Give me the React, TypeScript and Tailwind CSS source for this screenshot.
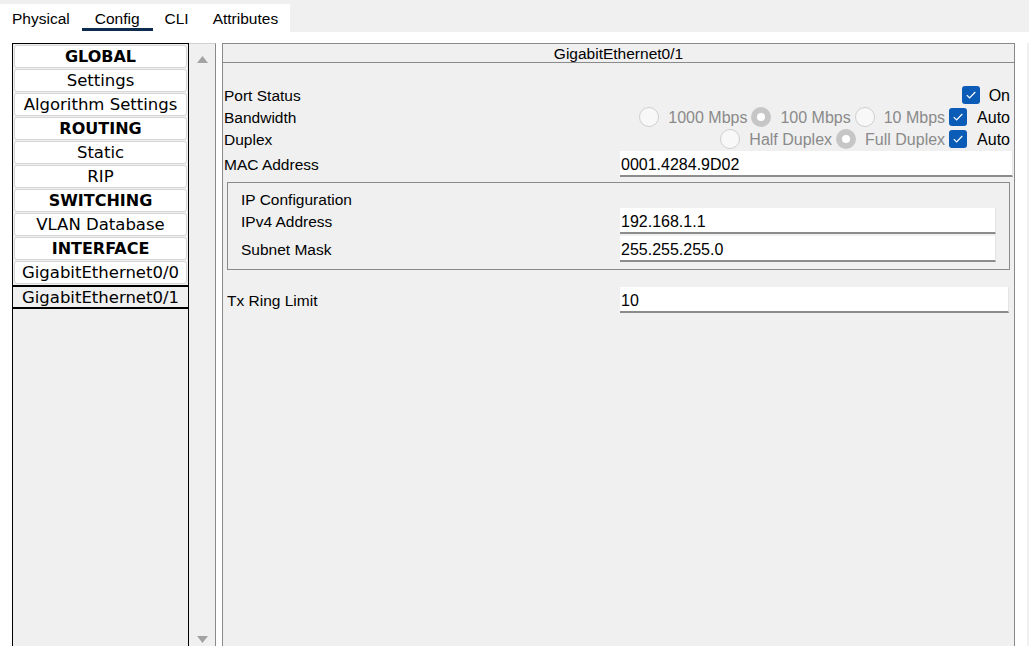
import React from "react";

const listItems = [
  { label: "GLOBAL", head: true },
  { label: "Settings" },
  { label: "Algorithm Settings" },
  { label: "ROUTING", head: true },
  { label: "Static" },
  { label: "RIP" },
  { label: "SWITCHING", head: true },
  { label: "VLAN Database" },
  { label: "INTERFACE", head: true },
  { label: "GigabitEthernet0/0" },
  { label: "GigabitEthernet0/1", selected: true },
];

const tabs = ["Physical", "Config", "CLI", "Attributes"];

function Check() {
  return (
    <span className="flex h-[18px] w-[18px] shrink-0 items-center justify-center rounded-[3px] bg-[#0b5cb6]">
      <svg width="12" height="10" viewBox="0 0 12 10">
        <path d="M1.8 5.2 4.6 8 10.3 2" fill="none" stroke="#fff" strokeWidth="1.2" />
      </svg>
    </span>
  );
}

function Radio({ on }: { on?: boolean }) {
  if (on) {
    return (
      <span className="flex h-[20px] w-[20px] shrink-0 items-center justify-center rounded-full bg-[#c6c6c6]">
        <span className="h-[8px] w-[8px] rounded-full bg-white" />
      </span>
    );
  }
  return <span className="h-[20px] w-[20px] shrink-0 rounded-full border border-[#cfcfcf] bg-[#f8f8f8]" />;
}

function Option({ label, on }: { label: string; on?: boolean }) {
  return (
    <div className="mr-[4px] flex items-center">
      <Radio on={on} />
      <span className="ml-[9px] pt-[2px] text-[16px] text-[#8a8a8a]">{label}</span>
    </div>
  );
}

function Field({ value }: { value: string }) {
  return (
    <div className="h-[26px] flex-1 border-r border-b-2 border-r-[#e4e4e4] border-b-[#8c8c8c] bg-white pl-[1px] text-[16px] leading-[27px] text-black">
      {value}
    </div>
  );
}

export default function App() {
  return (
    <div className="h-[646px] w-[1029px] overflow-hidden bg-white font-['Liberation_Sans',Arial,sans-serif] text-black">
      {/* tabs */}
      <div className="flex h-[32px] bg-[#f0f0f0]">
        <div className="mt-[4px] flex h-[28px] w-[290px] items-start bg-white">
          {tabs.map((t) => (
            <div
              key={t}
              className={`px-[12px] pt-[5px] text-[15.5px] leading-[19px] border-b-[3px] ${
                t === "Config" ? "border-[#0c2b4e] px-[13px]" : "border-transparent"
              }`}
            >
              {t}
            </div>
          ))}
        </div>
      </div>

      <div className="flex h-[618px] pt-[11px]">
        {/* left list */}
        <div className="ml-[12px] w-[177px] border border-b-0 border-black bg-[#f0f0f0] p-[1px] font-['DejaVu_Sans',Verdana,sans-serif]">
          {listItems.map((it) =>
            it.selected ? (
              <div
                key={it.label}
                className="-mx-[2px] h-[24px] border-x border-y-2 border-black bg-[#f0f0f0] text-center text-[16.5px] leading-[22px]"
              >
                {it.label}
              </div>
            ) : (
              <div
                key={it.label}
                className={`mb-[1px] h-[23px] rounded-[3px] border border-[#d6d6d6] bg-white text-center leading-[22px] ${
                  it.head ? "text-[16px] font-bold" : "text-[16.5px]"
                }`}
              >
                {it.label}
              </div>
            )
          )}
        </div>

        {/* scrollbar */}
        <div className="flex w-[27px] flex-col items-center justify-between border-t border-r border-t-[#d0d0d0] border-r-[#8a8a8a] bg-[#f0f0f0] pt-[12px] pb-[7px]">
          <svg width="11" height="7" viewBox="0 0 11 7">
            <path d="M5.5 0 11 7H0z" fill="#a3a3a3" />
          </svg>
          <svg width="11" height="7" viewBox="0 0 11 7">
            <path d="M0 0h11L5.5 7z" fill="#a3a3a3" />
          </svg>
        </div>

        {/* right panel */}
        <div className="ml-[6px] w-[793px] border border-b-0 border-[#8a8a8a] bg-[#f0f0f0]">
          <div className="h-[19px] border-b border-[#8a8a8a] text-center text-[15.5px] leading-[20px]">
            GigabitEthernet0/1
          </div>

          <div className="pt-[21px]">
            <div className="flex h-[22px] items-center pl-[1px] pr-[4px]">
              <span className="flex-1 pt-[2px] text-[15.5px]">Port Status</span>
              <Check />
              <span className="ml-[9px] pt-[2px] text-[16px]">On</span>
            </div>
            <div className="flex h-[22px] items-center pl-[1px] pr-[4px]">
              <span className="flex-1 pt-[2px] text-[15.5px]">Bandwidth</span>
              <Option label="1000 Mbps" />
              <Option label="100 Mbps" on />
              <Option label="10 Mbps" />
              <Check />
              <span className="ml-[10px] pt-[2px] text-[16px]">Auto</span>
            </div>
            <div className="flex h-[22px] items-center pl-[1px] pr-[4px]">
              <span className="flex-1 pt-[2px] text-[15.5px]">Duplex</span>
              <Option label="Half Duplex" />
              <Option label="Full Duplex" on />
              <Check />
              <span className="ml-[10px] pt-[2px] text-[16px]">Auto</span>
            </div>
            <div className="flex h-[28px] items-center pl-[1px] pr-[1px]">
              <span className="w-[396px] pt-[2px] text-[15.5px]">MAC Address</span>
              <Field value="0001.4284.9D02" />
            </div>
          </div>

          {/* IP configuration */}
          <div className="mx-[4px] mt-[4px] border border-[#8a8a8a] px-[13px] pt-[4px] pb-[7px]">
            <div className="h-[21px] pt-[2px] text-[15.5px] leading-[21px]">IP Configuration</div>
            <div className="flex h-[26px] items-center">
              <span className="w-[379px] pt-[2px] text-[15.5px]">IPv4 Address</span>
              <Field value="192.168.1.1" />
            </div>
            <div className="mt-[2px] flex h-[26px] items-center">
              <span className="w-[379px] pt-[2px] text-[15.5px]">Subnet Mask</span>
              <Field value="255.255.255.0" />
            </div>
          </div>

          <div className="mt-[17px] mr-[5px] ml-[4px] flex h-[26px] items-center">
            <span className="w-[393px] pt-[2px] text-[15.5px]">Tx Ring Limit</span>
            <Field value="10" />
          </div>
        </div>
        <div className="ml-[12px] flex-1 bg-[#f0f0f0]" />
      </div>
    </div>
  );
}
